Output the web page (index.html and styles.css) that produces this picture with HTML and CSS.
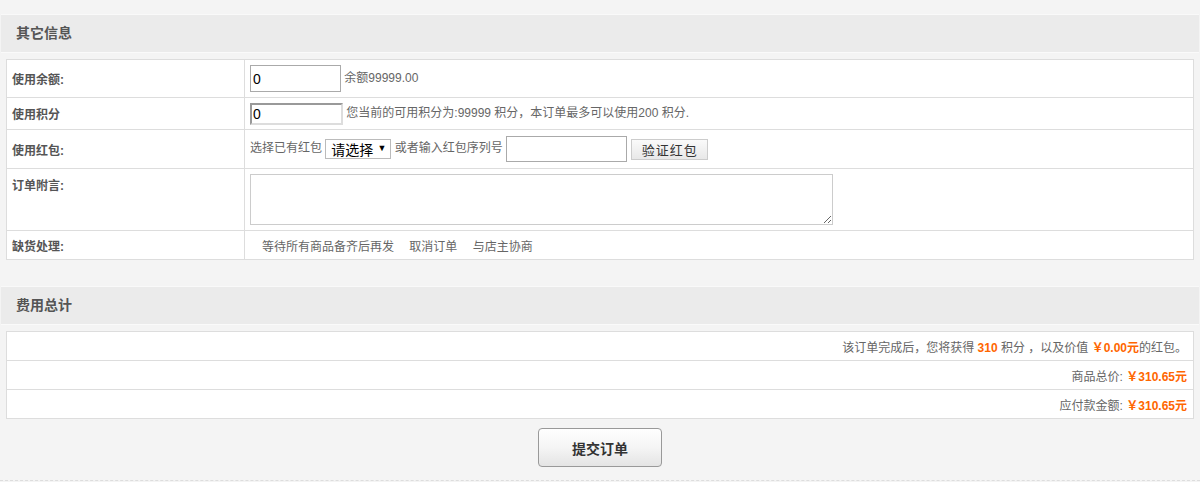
FILE: index.html
```html
<!DOCTYPE html>
<html lang="zh-CN">
<head>
    <meta charset="UTF-8">
    <meta name="viewport" content="width=device-width, initial-scale=1.0">
    <title>确认订单</title>
    <link rel="stylesheet" href="styles.css">
</head>
<body>
    <div class="wrap">
        <div class="box">
            <h3 class="box-title">其它信息</h3>
            <div class="box-body">
                <table class="form-table">
                    <tr class="row-surplus">
                        <th>使用余额:</th>
                        <td><input type="text" class="ipt ipt-surplus" value="0"> 余额99999.00</td>
                    </tr>
                    <tr class="row-integral">
                        <th>使用积分</th>
                        <td><input type="text" class="ipt ipt-integral" value="0"> 您当前的可用积分为:99999 积分，本订单最多可以使用200 积分.</td>
                    </tr>
                    <tr class="row-bonus">
                        <th>使用红包:</th>
                        <td>
                            选择已有红包
                            <span class="select-wrap">
                                <select class="sel">
                                    <option>请选择</option>
                                </select>
                                <span class="sel-arrow">&#9660;</span>
                            </span>
                            或者输入红包序列号
                            <input type="text" class="ipt ipt-bonus">
                            <button type="button" class="btn-check">验证红包</button>
                        </td>
                    </tr>
                    <tr class="row-note">
                        <th>订单附言:</th>
                        <td><textarea class="note"></textarea></td>
                    </tr>
                    <tr class="row-stock">
                        <th>缺货处理:</th>
                        <td>
                            <label class="opt">等待所有商品备齐后再发</label>
                            <label class="opt">取消订单</label>
                            <label class="opt">与店主协商</label>
                        </td>
                    </tr>
                </table>
            </div>
        </div>

        <div class="box box-total">
            <h3 class="box-title">费用总计</h3>
            <div class="box-body">
                <table class="total-table">
                    <tr>
                        <td>该订单完成后，您将获得 <b class="price">310</b> 积分 ，以及价值 <b class="price">￥0.00元</b>的红包。</td>
                    </tr>
                    <tr>
                        <td>商品总价: <b class="price">￥310.65元</b></td>
                    </tr>
                    <tr>
                        <td>应付款金额: <b class="price">￥310.65元</b></td>
                    </tr>
                </table>
            </div>
        </div>

        <div class="actions">
            <button type="submit" class="btn-submit">提交订单</button>
        </div>
    </div>
</body>
</html>
```

FILE: styles.css
```css
body {
    margin: 0;
    padding: 0;
    background: #f4f4f4;
    font-family: "Liberation Sans", "Noto Sans CJK SC", sans-serif;
    font-size: 12px;
    color: #666;
}
.wrap {
    padding-top: 14px;
}
.box-title {
    margin: 0 1px;
    height: 37px;
    line-height: 37px;
    padding-left: 15px;
    background: #ebebeb;
    border-top: 1px solid #f9f9f9;
    border-bottom: 1px solid #fafafa;
    font-size: 14px;
    font-weight: bold;
    color: #555;
}
.box-body {
    padding: 6px 6px 0;
}
.box-total {
    margin-top: 26px;
}

/* form table */
.form-table,
.total-table {
    width: 100%;
    border-collapse: collapse;
    background: #fff;
    border: 1px solid #ddd;
}
.form-table th,
.form-table td,
.total-table td {
    border: 1px solid #ddd;
    padding: 0 5px;
    vertical-align: middle;
}
.form-table th {
    width: 227px;
    text-align: left;
    font-weight: bold;
    color: #555;
}
.row-surplus td, .row-surplus th { height: 37px; }
.row-integral td, .row-integral th { height: 31px; }
.row-bonus td, .row-bonus th { height: 38px; }
.row-note td, .row-note th { vertical-align: top; }
.row-note th { height: 54px; padding-top: 7px; }
.row-note td { height: 56px; padding-top: 5px; }
.row-stock td, .row-stock th { height: 28px; }

.ipt {
    box-sizing: border-box;
    font-family: "Liberation Sans", sans-serif;
    font-size: 14px;
    color: #000;
    padding: 0 2px;
    vertical-align: middle;
    outline: none;
    background: #fff;
}
.ipt-surplus {
    width: 91px;
    height: 27px;
    border: 1px solid #aaa;
}
.ipt-integral {
    width: 93px;
    height: 22px;
    border: 2px solid #ddd;
    border-top-color: #999;
    border-left-color: #999;
    padding-left: 1px;
}
.ipt-bonus {
    width: 121px;
    height: 26px;
    border: 1px solid #aaa;
}
.select-wrap {
    position: relative;
    display: inline-block;
    vertical-align: middle;
}
.sel {
    -webkit-appearance: none;
    appearance: none;
    width: 66px;
    height: 20px;
    padding: 0 0 0 5px;
    border: 1px solid #bbb;
    background: #fff;
    font-family: "Noto Sans CJK SC", sans-serif;
    font-size: 14px;
    line-height: 18px;
    color: #000;
    outline: none;
}
.sel-arrow {
    position: absolute;
    right: 5px;
    top: 4px;
    font-size: 9px;
    color: #000;
    pointer-events: none;
}
.btn-check {
    width: 77px;
    height: 21px;
    margin-left: 1px;
    padding: 0;
    border: 1px solid #ccc;
    background: linear-gradient(#fafafa, #e8e8e8);
    font-family: "Noto Sans CJK SC", sans-serif;
    font-size: 13px;
    letter-spacing: 1px;
    color: #333;
    vertical-align: middle;
    cursor: pointer;
}
.note {
    display: block;
    box-sizing: border-box;
    width: 583px;
    height: 51px;
    border: 1px solid #ccc;
    margin: 0;
}
.opt {
    margin-left: 12px;
    margin-right: 4px;
}
.opt + .opt {
    margin-left: 8px;
}

/* totals */
.total-table td {
    height: 28px;
    text-align: right;
    padding-right: 6px;
}
.price {
    color: #ff6600;
    font-weight: bold;
}

.actions {
    padding: 9px 0 13px;
    text-align: center;
    border-bottom: 1px dashed #ddd;
}
.btn-submit {
    width: 124px;
    height: 39px;
    border: 1px solid #999;
    border-radius: 4px;
    background: linear-gradient(#fefefe 0%, #f5f5f5 50%, #e4e4e4 100%);
    font-family: "Noto Sans CJK SC", sans-serif;
    font-size: 14px;
    font-weight: bold;
    color: #333;
    cursor: pointer;
}
.btn-submit:hover {
    background: linear-gradient(#fff, #ececec);
}
```
